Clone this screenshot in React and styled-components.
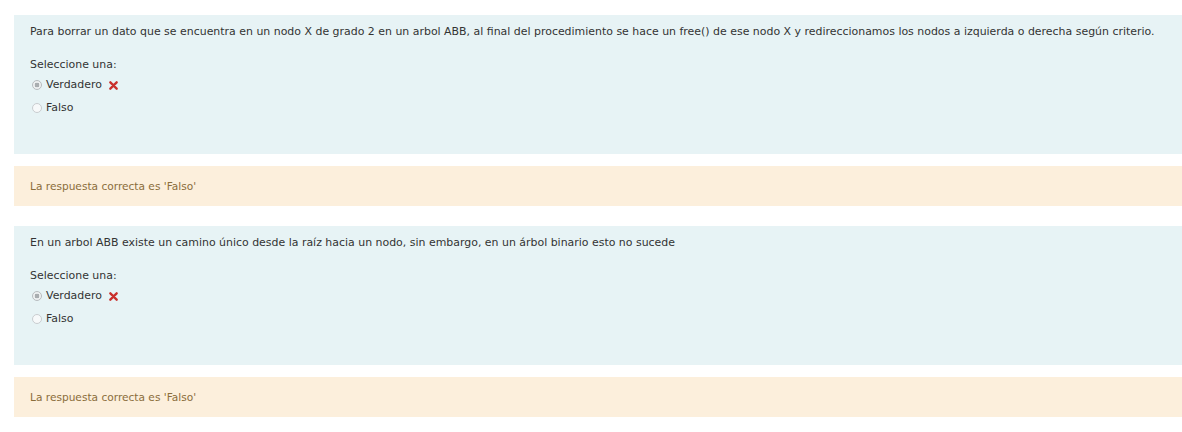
import styled, { createGlobalStyle } from 'styled-components';

const GlobalStyle = createGlobalStyle`
  body {
    margin: 0;
    background: #ffffff;
    font-family: "DejaVu Sans", "Liberation Sans", sans-serif;
    color: #333333;
  }
`;

const Page = styled.div`
  padding: 15px 0 0 14px;
  display: flex;
  flex-direction: column;
  gap: 20px;
`;

const Question = styled.div`
  display: flex;
  flex-direction: column;
  gap: 12px;
`;

const Formulation = styled.div`
  background: #e7f3f5;
  padding: 9px 16px 38px;
  font-size: 10.95px;
  line-height: 16px;
`;

const QText = styled.div`
  margin-bottom: 17px;
`;

const Prompt = styled.div`
  margin-bottom: 4px;
`;

const Options = styled.div`
  display: flex;
  flex-direction: column;
  gap: 7px;
`;

const Option = styled.div`
  display: flex;
  align-items: center;
  padding-left: 2px;
  gap: 4px;
`;

const Radio = styled.span`
  width: 8px;
  height: 8px;
  border-radius: 50%;
  border: 1px solid ${({ $checked }) => ($checked ? '#b8bcbf' : '#c9cdd0')};
  background: ${({ $checked }) =>
    $checked ? 'radial-gradient(circle, #a9adb0 0 2.2px, #eef0f1 2.6px)' : '#f7f9fa'};
  flex: none;
`;

const Mark = styled.svg`
  margin-left: 3px;
  flex: none;
`;

const Feedback = styled.div`
  background: #fcefdc;
  color: #8a6d3b;
  padding: 12px 16px;
  font-size: 10.6px;
  line-height: 16px;
`;

const Cross = () => (
  <Mark width="9" height="9" viewBox="0 0 10 10">
    <path d="M1.5 1.5 L8.5 8.5 M8.5 1.5 L1.5 8.5" stroke="#c9302c" strokeWidth="2.6" strokeLinecap="round" />
  </Mark>
);

const questions = [
  'Para borrar un dato que se encuentra en un nodo X de grado 2 en un arbol ABB, al final del procedimiento se hace un free() de ese nodo X y redireccionamos los nodos a izquierda o derecha según criterio.',
  'En un arbol ABB existe un camino único desde la raíz hacia un nodo, sin embargo, en un árbol binario esto no sucede',
];

export default function App() {
  return (
    <>
      <GlobalStyle />
      <Page>
        {questions.map((q) => (
          <Question key={q}>
            <Formulation>
              <QText>{q}</QText>
              <Prompt>Seleccione una:</Prompt>
              <Options>
                <Option>
                  <Radio $checked />
                  <span>Verdadero</span>
                  <Cross />
                </Option>
                <Option>
                  <Radio />
                  <span>Falso</span>
                </Option>
              </Options>
            </Formulation>
            <Feedback>La respuesta correcta es 'Falso'</Feedback>
          </Question>
        ))}
      </Page>
    </>
  );
}
